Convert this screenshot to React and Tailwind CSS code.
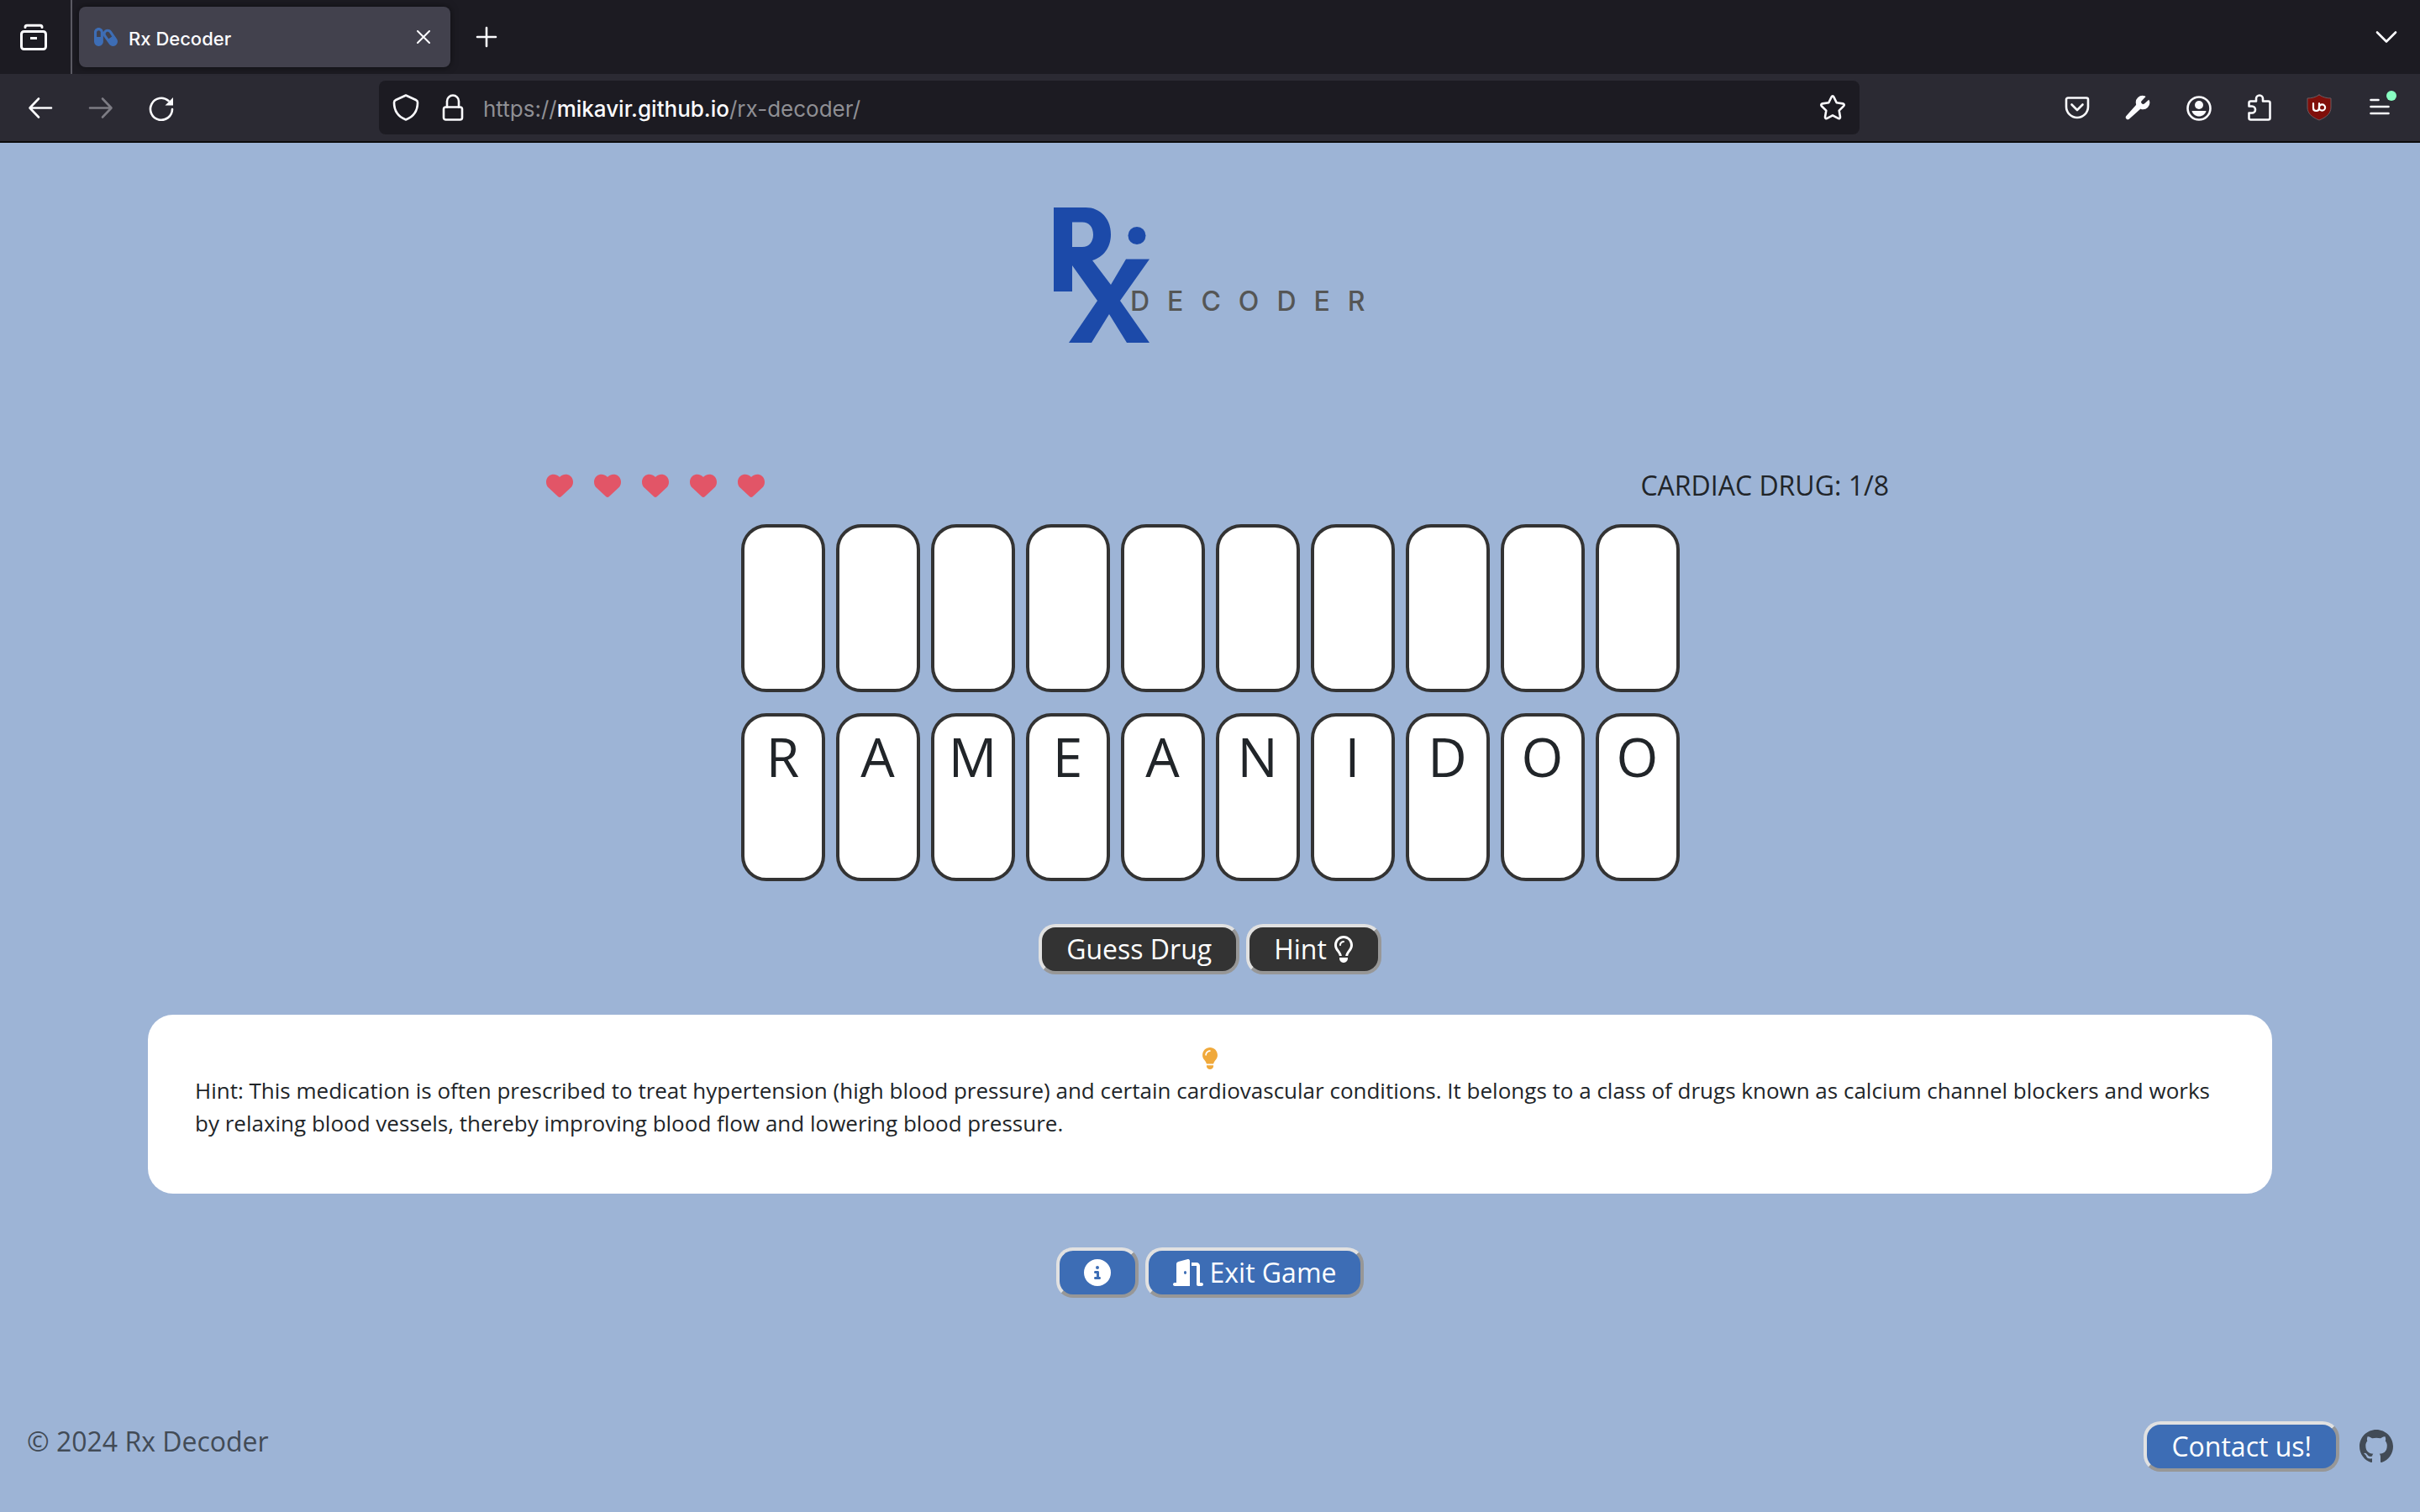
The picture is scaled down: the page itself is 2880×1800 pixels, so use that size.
import React from "react";
import { FaCapsules } from "react-icons/fa";
import {
  FaHeart,
  FaLightbulb,
  FaRegLightbulb,
  FaCircleInfo,
  FaDoorOpen,
} from "react-icons/fa6";
import { BsGithub } from "react-icons/bs";

const SLOTS = Array.from({ length: 10 }, () => "");
const LETTERS = ["R", "A", "M", "E", "A", "N", "I", "D", "O", "O"];

function Icon({ children, className = "size-8" }) {
  return (
    <svg
      viewBox="0 0 32 32"
      className={className}
      fill="none"
      stroke="currentColor"
      strokeWidth="2.6"
      strokeLinecap="round"
      strokeLinejoin="round"
      aria-hidden="true"
    >
      {children}
    </svg>
  );
}

function BarButton({ label, children, className = "" }) {
  return (
    <button type="button" aria-label={label} className={`relative shrink-0 ${className}`}>
      {children}
    </button>
  );
}

function TabStrip() {
  return (
    <div className="flex h-[88px] items-center bg-[#1c1b22] text-[#fbfbfe]">
      <div className="flex h-full items-center border-r-2 border-[#5b5a63] pr-7 pl-6">
        <BarButton label="View recent browsing">
          <Icon>
            <path d="M6 4.400C6 2.800 6.800 2.300 8 2.300h16c1.200 0 2 .5 2 2.100" strokeWidth="3" />
            <rect x="1.500" y="9.500" width="29" height="21" rx="3" strokeWidth="3" />
            <path d="M12 16h8v3h-8z" fill="currentColor" stroke="none" />
          </Icon>
        </BarButton>
      </div>
      <div className="ml-2 flex h-[72px] w-[442px] items-center rounded-lg bg-[#42414d] pr-6 pl-[18px] shadow-[0_0_8px_rgba(0,0,0,0.5)]">
        <FaCapsules className="size-7 text-[#3d6db5]" />
        <span className="ml-[13px] flex-1 pt-[3px] text-[22px] leading-8 font-medium">Rx Decoder</span>
        <BarButton label="Close tab">
          <Icon className="size-4">
            <path d="M2 2l28 28M30 2L2 30" strokeWidth="4" />
          </Icon>
        </BarButton>
      </div>
      <BarButton label="New tab" className="ml-[27px]">
        <Icon>
          <path d="M16 5v22M5 16h22" />
        </Icon>
      </BarButton>
      <BarButton label="List all tabs" className="mr-6 ml-auto">
        <Icon>
          <path d="M5 10.500l11 11 11-11" />
        </Icon>
      </BarButton>
    </div>
  );
}

function Toolbar() {
  return (
    <div className="flex h-[82px] items-center border-b-2 border-[#0c0c0d] bg-[#2b2a33] px-8 text-[#fbfbfe]">
      <div className="flex gap-10">
        <BarButton label="Back">
          <Icon>
            <path d="M29 16.500H4M14 5.500L3.500 16.500 14 27.500" />
          </Icon>
        </BarButton>
        <BarButton label="Forward" className="text-[#7d7c84]">
          <Icon>
            <path d="M3 16.500h25M18 5.500l10.500 11L18 27.500" />
          </Icon>
        </BarButton>
        <BarButton label="Reload">
          <Icon>
            <path d="M29 18A13 13 0 1 1 24.500 8" />
            <path d="M30 4v9.500h-9.500z" fill="currentColor" stroke="none" />
          </Icon>
        </BarButton>
      </div>

      <div className="mx-[243px] flex h-16 flex-1 items-center rounded-lg bg-[#1c1b22] px-4">
        <BarButton label="Tracking protection">
          <Icon>
            <path d="M16 1.500l12 5.500c1.500.7 2 1.500 2 3C30 20 25 27 16 30.500 7 27 2 20 2 10c0-1.500.5-2.300 2-3z" />
          </Icon>
        </BarButton>
        <BarButton label="Site information" className="ml-6">
          <Icon>
            <rect x="5" y="15.500" width="22" height="15" rx="2.500" />
            <path d="M9 15.500V8.500a7 7 0 0 1 14 0v7" />
          </Icon>
        </BarButton>
        <div
          role="textbox"
          aria-label="Address"
          className="ml-5 flex-1 pt-[3px] text-[26px] leading-8 whitespace-nowrap text-[#8f8f94]"
        >
          https://<span className="font-medium text-[#fbfbfe]">mikavir.github.io</span>/rx-decoder/
        </div>
        <BarButton label="Bookmark this page">
          <Icon>
            <path d="M16 2.300c.6 0 1 .4 1.300 1l3.400 7 7.600 1.100c1.400.2 1.900 1.800.9 2.800l-5.500 5.400 1.300 7.600c.2 1.400-1.200 2.400-2.400 1.700L16 25.300l-6.600 3.600c-1.200.7-2.600-.3-2.400-1.700l1.300-7.600-5.500-5.400c-1-1-.5-2.600.9-2.800l7.600-1.100 3.400-7c.3-.6.7-1 1.300-1z" />
          </Icon>
        </BarButton>
      </div>

      <div className="flex gap-10">
        <BarButton label="Save to Pocket">
          <Icon>
            <path d="M5 4.500h22a2 2 0 0 1 2 2V15a13 13 0 0 1-26 0V6.500a2 2 0 0 1 2-2z" />
            <path d="M9.500 12.500L16 19l6.500-6.500" />
          </Icon>
        </BarButton>
        <BarButton label="Developer tools">
          <Icon>
            <path
              d="M24.500 2.300a8 8 0 0 0-10.400 9.700c.1.500 0 1-.3 1.300L2.200 26.200a2.600 2.600 0 0 0 3.600 3.600l12.900-11.600c.4-.3.800-.4 1.300-.3A8 8 0 0 0 30 8l-.8-1.200-5 4.400a2.300 2.300 0 0 1-3.300-3.300l4.700-4.900z"
              fill="currentColor"
              stroke="none"
            />
          </Icon>
        </BarButton>
        <BarButton label="Account">
          <Icon>
            <circle cx="17" cy="17" r="13.500" />
            <circle cx="17" cy="13" r="5" fill="currentColor" stroke="none" />
            <path d="M8.500 20h17c-1 4-4.500 6.500-8.500 6.500S9.500 24 8.500 20z" fill="currentColor" stroke="none" />
          </Icon>
        </BarButton>
        <BarButton label="Extensions">
          <Icon>
            <path d="M4.500 10.500a2 2 0 0 1 2-2H13V5.500a4 4 0 0 1 8 0v3h6.500a2 2 0 0 1 2 2v18a2 2 0 0 1-2 2h-21a2 2 0 0 1-2-2v-6h3.500a4 4 0 0 0 0-8H4.500z" />
          </Icon>
        </BarButton>
        <BarButton label="uBlock Origin">
          <Icon>
            <path
              d="M16 1c4.500 2.800 9 4 14 4v11c0 6.500-5 11.500-14 15C7 27.500 2 22.500 2 16V5c5 0 9.500-1.200 14-4z"
              fill="#800f0a"
              stroke="#6d5a60"
              strokeWidth="1"
            />
            <path d="M9 11v5.500c0 2 1.500 3.500 3.500 3.500s3.500-1.500 3.500-3.500V11" stroke="#fff" strokeWidth="2.200" />
            <circle cx="19.500" cy="16" r="3.600" stroke="#fff" strokeWidth="2.200" />
          </Icon>
        </BarButton>
        <BarButton label="Open application menu">
          <Icon>
            <path d="M5.500 7h9M5.500 15h21M5.500 23h21" />
          </Icon>
          <span className="absolute -top-1 -right-1 size-3 rounded-full bg-[#88ffc2]" />
        </BarButton>
      </div>
    </div>
  );
}

function Logo() {
  return (
    <svg viewBox="-26 0 424 162" className="mx-auto h-[162px] w-[424px]" role="img" aria-label="Rx Decoder">
      <g fill="#1c4aa9">
        <path
          fillRule="evenodd"
          d="M0 0H38C56 0 68 14 68 32C68 48 59 59 46 63L68 92L86 61.500H114L79 111L114 161H87L66 127L45 161H18L52 111L22 69V100H0ZM22 17.500V47H34C42 47 47 41 47 32.500C47 23 42 17.500 34 17.500Z"
        />
        <circle cx="99" cy="33.500" r="10.500" />
      </g>
      <text x="91" y="123" className="fill-[#555655] font-['Inter'] text-[32px] font-medium tracking-[21px]">
        DECODER
      </text>
    </svg>
  );
}

function TileRow({ tiles }) {
  return (
    <div className="flex justify-center gap-[13px]">
      {tiles.map((letter, i) => (
        <div
          key={i}
          className="h-[200px] w-[100px] rounded-[30px] border-4 border-[#333333] bg-white pt-2 text-center text-[64px] leading-[80px]"
        >
          {letter}
        </div>
      ))}
    </div>
  );
}

function GameButton({ dark, label, children }) {
  return (
    <button
      type="button"
      aria-label={label}
      className={`flex h-[60px] items-center gap-2 rounded-[20px] border-4 border-t-[#e1e1e1] border-r-[#979797] border-b-[#979797] border-l-[#e1e1e1] px-[29px] text-[32px] leading-[48px] text-white ${
        dark ? "bg-[#333333]" : "bg-[#3d6db5]"
      }`}
    >
      {children}
    </button>
  );
}

export default function App() {
  return (
    <div className="flex min-h-screen flex-col bg-[#9db4d6] font-['Open_Sans',sans-serif] text-[#212529]">
      <header className="font-['Inter',sans-serif]">
        <TabStrip />
        <Toolbar />
      </header>

      <main className="pt-[77px]">
        <Logo />

        <div className="mx-auto mt-[145px] flex w-3/5 items-center justify-between pr-14 pl-[74px]">
          <div className="flex gap-[25px]" role="img" aria-label="5 lives left">
            {[1, 2, 3, 4, 5].map((n) => (
              <FaHeart key={n} className="size-8 text-[#e25567]" />
            ))}
          </div>
          <p className="text-[32px] leading-[48px]">CARDIAC DRUG: 1/8</p>
        </div>

        <div className="mt-[22px] flex flex-col gap-[25px]">
          <TileRow tiles={SLOTS} />
          <TileRow tiles={LETTERS} />
        </div>

        <div className="mt-[51px] flex justify-center gap-2">
          <GameButton dark>Guess Drug</GameButton>
          <GameButton dark>
            Hint
            <FaRegLightbulb className="h-8 w-6" />
          </GameButton>
        </div>

        <section className="mx-44 mt-12 rounded-[30px] bg-white px-14 pt-8 pb-16 text-[26px] leading-[39px]">
          <div className="flex h-[39px] items-center justify-center">
            <FaLightbulb className="size-[26px] text-[#f0a93b]" />
          </div>
          <p>
            Hint: This medication is often prescribed to treat hypertension (high blood pressure) and
            certain cardiovascular conditions. It belongs to a class of drugs known as calcium channel
            blockers and works by relaxing blood vessels, thereby improving blood flow and lowering
            blood pressure.
          </p>
        </section>

        <div className="mt-16 flex justify-center gap-2">
          <GameButton label="How to play">
            <FaCircleInfo className="size-8" />
          </GameButton>
          <GameButton>
            <FaDoorOpen className="h-8 w-9" />
            Exit Game
          </GameButton>
        </div>
      </main>

      <footer className="mt-[147px] flex items-start justify-between px-8">
        <p className="text-[32px] leading-[48px] text-[#424b56]">© 2024 Rx Decoder</p>
        <div className="flex items-center gap-6">
          <GameButton>Contact us!</GameButton>
          <a href="https://github.com/mikavir/rx-decoder" aria-label="GitHub">
            <BsGithub className="size-10 text-[#424b56]" />
          </a>
        </div>
      </footer>
    </div>
  );
}
